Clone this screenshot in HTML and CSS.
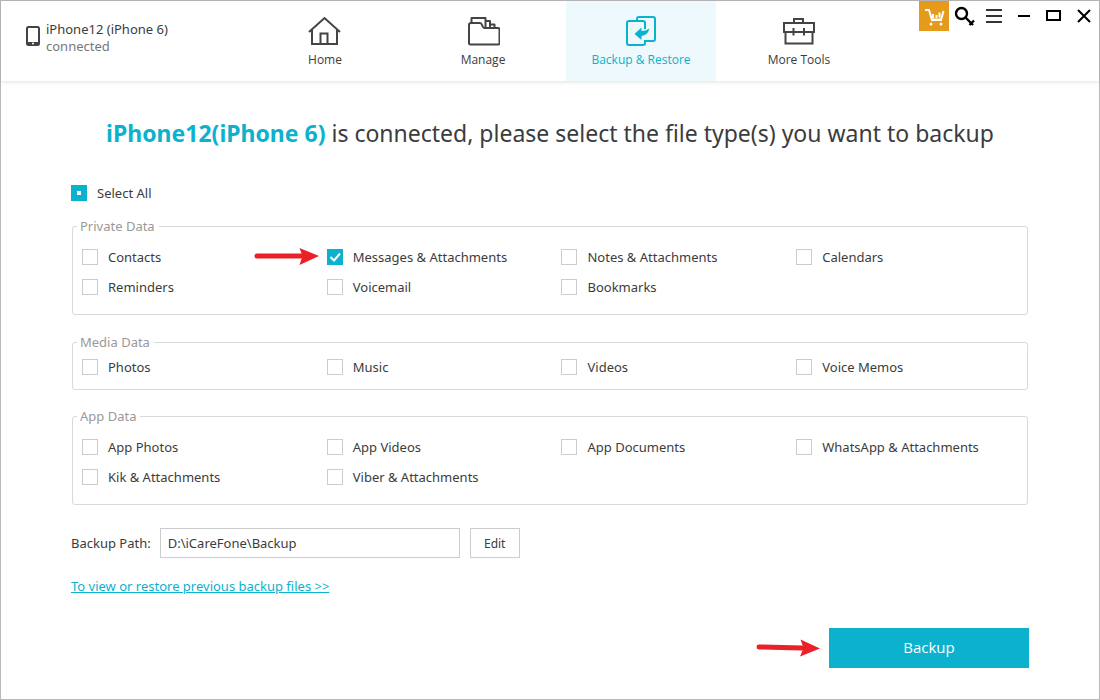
FILE: index.html
```html
<!DOCTYPE html>
<html lang="en">
<head>
    <meta charset="UTF-8">
    <meta name="viewport" content="width=device-width, initial-scale=1.0">
    <title>Backup &amp; Restore</title>
    <link rel="stylesheet" href="styles.css">
</head>
<body>
    <div class="window">
        <header class="header">
            <div class="device">
                <svg class="device-icon" width="14" height="20" viewBox="0 0 14 20">
                    <rect x="1" y="1" width="12" height="18" rx="1.5" fill="none" stroke="#444" stroke-width="2"/>
                    <path d="M1 16h12v3H1z" fill="#444"/>
                    <circle cx="7" cy="17.500" r="1" fill="#fff"/>
                </svg>
                <div class="device-txt">
                    <p class="device-name">iPhone12 (iPhone 6)</p>
                    <p class="device-state">connected</p>
                </div>
            </div>
            <nav class="nav">
                <a href="#" class="nav-item">
                    <svg width="34" height="32" viewBox="0 0 34 32" fill="none" stroke="#444" stroke-width="2">
                        <path d="M1 17L16.500 3 32 17M4 15v14h25V15M12.500 29V18.500h7V29"/>
                    </svg>
                    <span>Home</span>
                </a>
                <a href="#" class="nav-item">
                    <svg width="34" height="32" viewBox="0 0 34 32" fill="none" stroke="#444" stroke-width="2" stroke-linejoin="round">
                        <path d="M3 10q0-2 2-2h9q1.500 0 2 2t2 3h14q1.500 0 1.500 1.500V28q0 1.500-1.500 1.500H4.500Q3 29.500 3 28z"/>
                        <path d="M5.500 7.500V3h14v9.500M19.500 6H24v6.500M24 9.500h4.500v3"/>
                    </svg>
                    <span>Manage</span>
                </a>
                <a href="#" class="nav-item active">
                    <svg width="34" height="32" viewBox="0 0 34 32" fill="none" stroke="#0cb1ce" stroke-width="2" stroke-linejoin="round">
                        <path d="M21 14V8q0-2-2-2H5Q3 6 3 8v20q0 2 2 2h14q2 0 2-2v-3"/>
                        <path d="M13 6V4q0-2 2-2h14q2 0 2 2v20q0 2-2 2h-8"/>
                        <path d="M10.500 19l7-6.500v3.500q4.500 0 8-2.500Q23.500 20.500 17.500 21v4z" fill="#0cb1ce" stroke="none"/>
                    </svg>
                    <span>Backup &amp; Restore</span>
                </a>
                <a href="#" class="nav-item">
                    <svg width="34" height="32" viewBox="0 0 34 32" fill="none" stroke="#444" stroke-width="2">
                        <path d="M12 8V4h9v4M2 8h30v9H2zM3.500 17v11.500h27V17M11.500 13v7.500M22 13v7.500"/>
                    </svg>
                    <span>More Tools</span>
                </a>
            </nav>
            <div class="controls">
                <button class="cart" aria-label="Store">
                    <svg width="30" height="30" viewBox="0 0 30 30" fill="none" stroke="#fff" stroke-width="2">
                        <path d="M6 9h4l3 10h9L24.500 10M12 18.500h11M14 13v4M17.500 14v3M20.500 11.500v5"/>
                        <circle cx="12" cy="23" r="1.500" fill="#fff" stroke="none"/>
                        <circle cx="22" cy="23" r="1.500" fill="#fff" stroke="none"/>
                    </svg>
                </button>
                <button aria-label="Register">
                    <svg width="30" height="30" viewBox="0 0 30 30" fill="none" stroke="#000" stroke-width="2.400">
                        <circle cx="12.500" cy="12.500" r="5.500"/>
                        <path d="M16.500 16.500l7.500 7.500M20.500 24l4.500-4.500"/>
                    </svg>
                </button>
                <button aria-label="Menu">
                    <svg width="30" height="30" viewBox="0 0 30 30" stroke="#333" stroke-width="2">
                        <path d="M7 9h16M7 15h16M7 21h16"/>
                    </svg>
                </button>
                <button aria-label="Minimize">
                    <svg width="30" height="30" viewBox="0 0 30 30" stroke="#000" stroke-width="2">
                        <path d="M9 15h12"/>
                    </svg>
                </button>
                <button aria-label="Maximize">
                    <svg width="30" height="30" viewBox="0 0 30 30" fill="none" stroke="#000" stroke-width="2">
                        <path d="M8 10h13v9H8z"/>
                    </svg>
                </button>
                <button aria-label="Close">
                    <svg width="30" height="30" viewBox="0 0 30 30" stroke="#000" stroke-width="2">
                        <path d="M9 9l12 12M21 9L9 21"/>
                    </svg>
                </button>
            </div>
        </header>
        <main class="main">
            <h1 class="title"><strong>iPhone12(iPhone 6)</strong> is connected, please select the file type(s) you want to backup</h1>
            <label class="check select-all"><input type="checkbox" class="partial"><span>Select All</span></label>

            <fieldset class="group">
                <legend>Private Data</legend>
                <div class="group-list">
                    <label class="check"><input type="checkbox"><span>Contacts</span></label>
                    <label class="check">
                        <svg class="arrow pointer" width="66" height="18" viewBox="0 0 66 18">
                            <path d="M3 8h44" stroke="#ec2027" stroke-width="5" stroke-linecap="round"/>
                            <path d="M45.500 0L65 8 45.500 17 48.500 8z" fill="#ec2027"/>
                        </svg>
                        <input type="checkbox" checked><span>Messages &amp; Attachments</span>
                    </label>
                    <label class="check"><input type="checkbox"><span>Notes &amp; Attachments</span></label>
                    <label class="check"><input type="checkbox"><span>Calendars</span></label>
                    <label class="check"><input type="checkbox"><span>Reminders</span></label>
                    <label class="check"><input type="checkbox"><span>Voicemail</span></label>
                    <label class="check"><input type="checkbox"><span>Bookmarks</span></label>
                </div>
            </fieldset>

            <fieldset class="group short">
                <legend>Media Data</legend>
                <div class="group-list">
                    <label class="check"><input type="checkbox"><span>Photos</span></label>
                    <label class="check"><input type="checkbox"><span>Music</span></label>
                    <label class="check"><input type="checkbox"><span>Videos</span></label>
                    <label class="check"><input type="checkbox"><span>Voice Memos</span></label>
                </div>
            </fieldset>

            <fieldset class="group">
                <legend>App Data</legend>
                <div class="group-list">
                    <label class="check"><input type="checkbox"><span>App Photos</span></label>
                    <label class="check"><input type="checkbox"><span>App Videos</span></label>
                    <label class="check"><input type="checkbox"><span>App Documents</span></label>
                    <label class="check"><input type="checkbox"><span>WhatsApp &amp; Attachments</span></label>
                    <label class="check"><input type="checkbox"><span>Kik &amp; Attachments</span></label>
                    <label class="check"><input type="checkbox"><span>Viber &amp; Attachments</span></label>
                </div>
            </fieldset>

            <div class="path">
                <label for="path">Backup Path:</label>
                <input type="text" id="path" value="D:\iCareFone\Backup">
                <button class="edit">Edit</button>
            </div>
            <a href="#" class="restore-link">To view or restore previous backup files &gt;&gt;</a>
            <div class="actions">
                <svg class="arrow" width="66" height="18" viewBox="0 0 66 18">
                    <path d="M4 8l43 1" stroke="#ec2027" stroke-width="5" stroke-linecap="round"/>
                    <path d="M45.500 0.500L65 9.500 45 17.500 48.500 9z" fill="#ec2027"/>
                </svg>
                <button class="backup">Backup</button>
            </div>
        </main>
    </div>
</body>
</html>
```
FILE: styles.css
```css
*{margin: 0;padding: 0;box-sizing: border-box}
body{font-family: "Noto Sans","Open Sans",sans-serif;font-size: 13px;line-height: 20px;color: #3c3c3c;background-color: #fff;}
a{text-decoration: none;color: inherit}
button,input{font-family: inherit;font-size: inherit;color: inherit;}
svg{display: block;}
.window{min-height: 100vh;border: 1px solid #b9b9b9;}

.header{display: flex;height: 80px;box-shadow: 0 1px 4px rgba(0,0,0,.12);}
.device{display: flex;flex: 0 0 249px;gap: 6px;padding: 20px 0 0 25px;}
.device-icon{margin-top: 5px;}
.device-txt{line-height: 17px;}
.device-state{color: #777;}
.nav{display: flex;gap: 8px;}
.nav-item{display: flex;flex-direction: column;align-items: center;gap: 3px;width: 150px;padding-top: 14px;font-family: "Open Sans",sans-serif;font-size: 12px;}
.nav-item.active{background-color: #edf9fc;color: #0cb1ce;}
.controls{display: flex;align-items: flex-start;margin-left: auto;}
.controls button{width: 30px;height: 30px;border: 0;background: none;}
.controls .cart{background-color: #e59a1b;}

.main{padding: 36px 70px 30px;}
.title{font-size: 23px;line-height: 32px;font-weight: 400;text-align: center;}
.title strong{font-weight: 700;color: #0cb1ce;}

.check{position: relative;display: flex;align-items: center;gap: 10px;height: 30px;}
.check input{flex: none;width: 16px;height: 16px;border: 1px solid #ccc;background-color: #fff;appearance: none;}
.check input:checked{border-color: #0cb1ce;background: #0cb1ce url("data:image/svg+xml,%3Csvg xmlns='http://www.w3.org/2000/svg' viewBox='0 0 14 14'%3E%3Cpath d='M2.500 7l3.500 3.500 6-7' fill='none' stroke='%23fff' stroke-width='2'/%3E%3C/svg%3E");}
.check .partial{border: 6px solid #0cb1ce;}
.select-all{margin-top: 29px;}

.group{margin: 8px 1px 17px;padding-left: 4px;border: 1px solid #d5dadd;border-radius: 3px;}
.group legend{padding: 0 4px 0 3px;line-height: 20px;color: #999;}
.group-list{display: grid;grid-template-columns: 245fr 235fr 235fr 231fr;padding: 6px 0 12px 5px;}
.short{margin-bottom: 16px;}
.short .group-list{padding: 0 0 7px 5px;}
.pointer{position: absolute;right: 100%;margin-right: 7px;}

.path{display: flex;align-items: center;margin-top: 23px;}
.path input{width: 300px;height: 30px;margin: 0 10px 0 9px;padding: 0 7px;border: 1px solid #ccc;}
.edit{width: 50px;height: 30px;border: 1px solid #ccc;background-color: #fff;}
.path .edit{font-size: 12px;}
.restore-link{display: inline-block;margin-top: 18px;color: #0cb1ce;text-decoration: underline;}
.actions{display: flex;justify-content: flex-end;align-items: center;gap: 8px;margin-top: 32px;}
.backup{width: 200px;height: 40px;padding-bottom: 3px;border: 0;background-color: #0cb1ce;color: #fff;}
.actions .backup{font-family: "Open Sans",sans-serif;font-size: 15px;}
```
